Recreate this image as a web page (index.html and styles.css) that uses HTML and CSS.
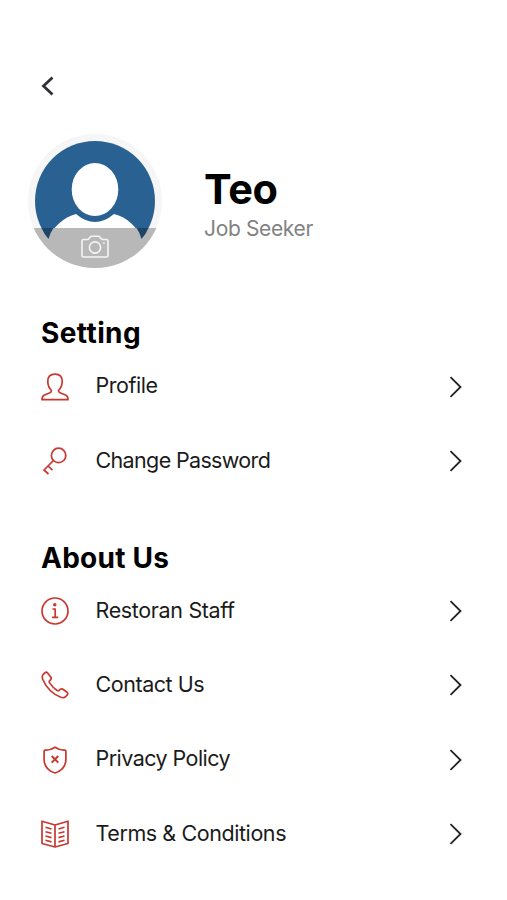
FILE: index.html
```html
<!DOCTYPE html>
<html lang="en">
<head>
<meta charset="utf-8">
<title>Account</title>
<link rel="stylesheet" href="styles.css">
</head>
<body>
<svg class="defs" aria-hidden="true"><symbol id="next" viewBox="0 0 14 22"><path d="M1.5 1.2 11.5 11 1.5 20.8"/></symbol></svg>
<main class="page">
  <nav class="topbar"><svg class="back" viewBox="0 0 14 20"><path d="M11.500 1.500 2.500 10l9 8.500"/></svg></nav>
  <header class="account">
    <svg class="avatar" viewBox="0 0 134 134">
      <defs>
        <clipPath id="outer"><circle cx="67" cy="67" r="67"/></clipPath>
        <clipPath id="inner"><circle cx="67" cy="67" r="60"/></clipPath>
      </defs>
      <circle cx="67" cy="67" r="67" fill="#f6f6f6"/>
      <circle cx="67" cy="67" r="60" fill="#296292"/>
      <g clip-path="url(#inner)" fill="#fff">
        <path d="M20 107C24 93 36 83 48 80Q67 96 86 80C99 83 110 93 114 107L106 134H28Z"/>
      </g>
      <ellipse cx="67" cy="55.500" rx="23.300" ry="26.600" fill="#fff"/>
      <g clip-path="url(#outer)">
        <path d="M0 94H134V134H0Z" fill="#b8b8b8"/>
        <path d="M13.500 94H25.500Q22 99 20.500 105Q16 100 13.500 94ZM120.500 94H108.500Q112 99 113.500 105Q118 100 120.500 94Z" fill="#1c4668"/>
      </g>
      <g class="camera"><path d="M55.500 105.500H60L63 102.300H71L74 105.500H78.500Q80 105.500 80 107V121.500Q80 123 78.500 123H55.500Q54 123 54 121.500V107Q54 105.500 55.500 105.500Z"/><circle cx="67" cy="113.500" r="5.600"/><circle cx="75.800" cy="109" r=".3"/></g>
    </svg>
    <div><h1 class="name">Teo</h1><p class="role">Job Seeker</p></div>
  </header>
  <section class="group">
    <h2 class="title">Setting</h2>
    <div class="row">
      <svg class="icon" viewBox="0 0 28 28"><path d="M10.500 17.500C7.500 14.500 6.800 12 6.800 8.500C6.800 4 9.500 1.200 14 1.200S21.200 4 21.200 8.500C21.200 12 20.500 14.500 17.500 17.500Q17.500 19.200 19.500 20L24.500 22Q27 23 27 26.700H1Q1 23 3.500 22L8.500 20Q10.500 19.200 10.500 17.500Z"/></svg>
      <span class="label profile">Profile</span><svg class="next"><use href="#next"/></svg>
    </div>
    <div class="row">
      <svg class="icon" viewBox="0 0 28 28"><circle cx="17.600" cy="8.400" r="7.200"/><path d="M12.500 13.500 3 23l4.500 4M7 19l4.500 4.200"/></svg>
      <span class="label password">Change Password</span><svg class="next"><use href="#next"/></svg>
    </div>
  </section>
  <section class="group">
    <h2 class="title about">About Us</h2>
    <div class="row">
      <svg class="icon" viewBox="0 0 28 28"><circle cx="14" cy="14" r="13"/><path d="M11.500 12H14.200V20M11 20.300H17.200"/><circle class="dot" cx="13.800" cy="7.800" r="1.700"/></svg>
      <span class="label staff">Restoran Staff</span><svg class="next"><use href="#next"/></svg>
    </div>
    <div class="row">
      <svg class="icon" viewBox="0 0 28 28"><path d="M2.300 3.300 4.300 1.500Q5.500.7 6.600 1.900L9.900 6.300Q10.700 7.500 9.700 8.600L8.300 10.200Q8 11 8.600 11.900Q11.700 16.500 16.200 19.500Q17.100 20.100 17.800 19.600L19.500 18.200Q20.700 17.400 21.900 18.200L26.100 21.300Q27.300 22.300 26.400 23.600L24.600 25.700Q22.900 27.400 19.800 26.300Q7.300 21.300 1.800 8.500Q.5 5.300 2.300 3.300Z"/></svg>
      <span class="label contact">Contact Us</span><svg class="next"><use href="#next"/></svg>
    </div>
    <div class="row">
      <svg class="icon" viewBox="0 0 28 28"><path d="M14 1.200C10.500 3.500 7.500 4.200 4.200 4C3.500 4 3.100 4.500 3.100 5.200V13C3.100 20.500 7.500 25 14 27C20.500 25 24.900 20.500 24.900 13V5.200C24.900 4.500 24.500 4 23.800 4C20.500 4.200 17.500 3.500 14 1.200Z"/><path class="cross" d="M10.700 10 17.300 16.600M17.300 10 10.700 16.600"/></svg>
      <span class="label privacy">Privacy Policy</span><svg class="next"><use href="#next"/></svg>
    </div>
    <div class="row">
      <svg class="icon" viewBox="0 0 28 28"><path d="M1 1.200 14 5 27 1.200V23.500L14 27 1 23.500ZM14 5V27M4.500 7.300 10.500 9M4.500 11.700l6 1.600M4.500 16l6 1.600M4.500 20.300l6 1.600M17.500 9l6-1.700M17.500 13.300l6-1.600M17.500 17.600l6-1.600M17.500 21.900l6-1.600"/></svg>
      <span class="label terms">Terms &amp; Conditions</span><svg class="next"><use href="#next"/></svg>
    </div>
  </section>
</main>
</body>
</html>
```
FILE: styles.css
```css
* { box-sizing: border-box; margin: 0; padding: 0; }
body { background: #fff; color: #1b1b1b; font-family: Inter, "Liberation Sans", sans-serif; }
svg { display: block; flex: none; fill: none; }
.defs { width: 0; height: 0; }
.page { width: 507px; height: 900px; padding: 76px 44px 0 41px; overflow: hidden; }
.topbar { height: 58px; }
.back { width: 14px; height: 20px; stroke: #30303a; stroke-width: 2.8; }
.account { display: flex; gap: 42px; height: 134px; margin-left: -13px; }
.avatar { width: 134px; height: 134px; }
.camera { stroke: #f5f5f5; stroke-width: 1.6; }
.name { margin-top: 31px; font-size: 41.500px; line-height: 48px; font-weight: 700; letter-spacing: -.3px; color: #000; }
.role { margin-top: 2px; font-size: 21px; line-height: 28px; letter-spacing: -.35px; color: #828282; }
.group { margin-top: 48px; height: 176.600px; }
.group + .group { height: 330px; }
.title { font-size: 28px; line-height: 34px; font-weight: 700; letter-spacing: .4px; color: #000; }
.about { letter-spacing: .25px; }
.row { display: flex; align-items: center; height: 74.200px; }
.title + .row { margin-top: -.5px; }
.icon { width: 28px; height: 28px; stroke: #c9372f; stroke-width: 1.7; stroke-linejoin: round; }
.dot { fill: #c9372f; stroke: none; }
.cross { stroke-width: 2; }
.label { flex: 1; margin: 0 0 2.500px 26.500px; font-size: 21.500px; line-height: 28px; white-space: nowrap; }
.profile { letter-spacing: -.45px; }
.password { letter-spacing: -.65px; }
.staff { letter-spacing: -.35px; }
.contact { letter-spacing: -.45px; }
.privacy { letter-spacing: -.55px; }
.terms { letter-spacing: -.42px; }
.next { width: 14px; height: 22px; stroke: #222; stroke-width: 1.8; }
```
